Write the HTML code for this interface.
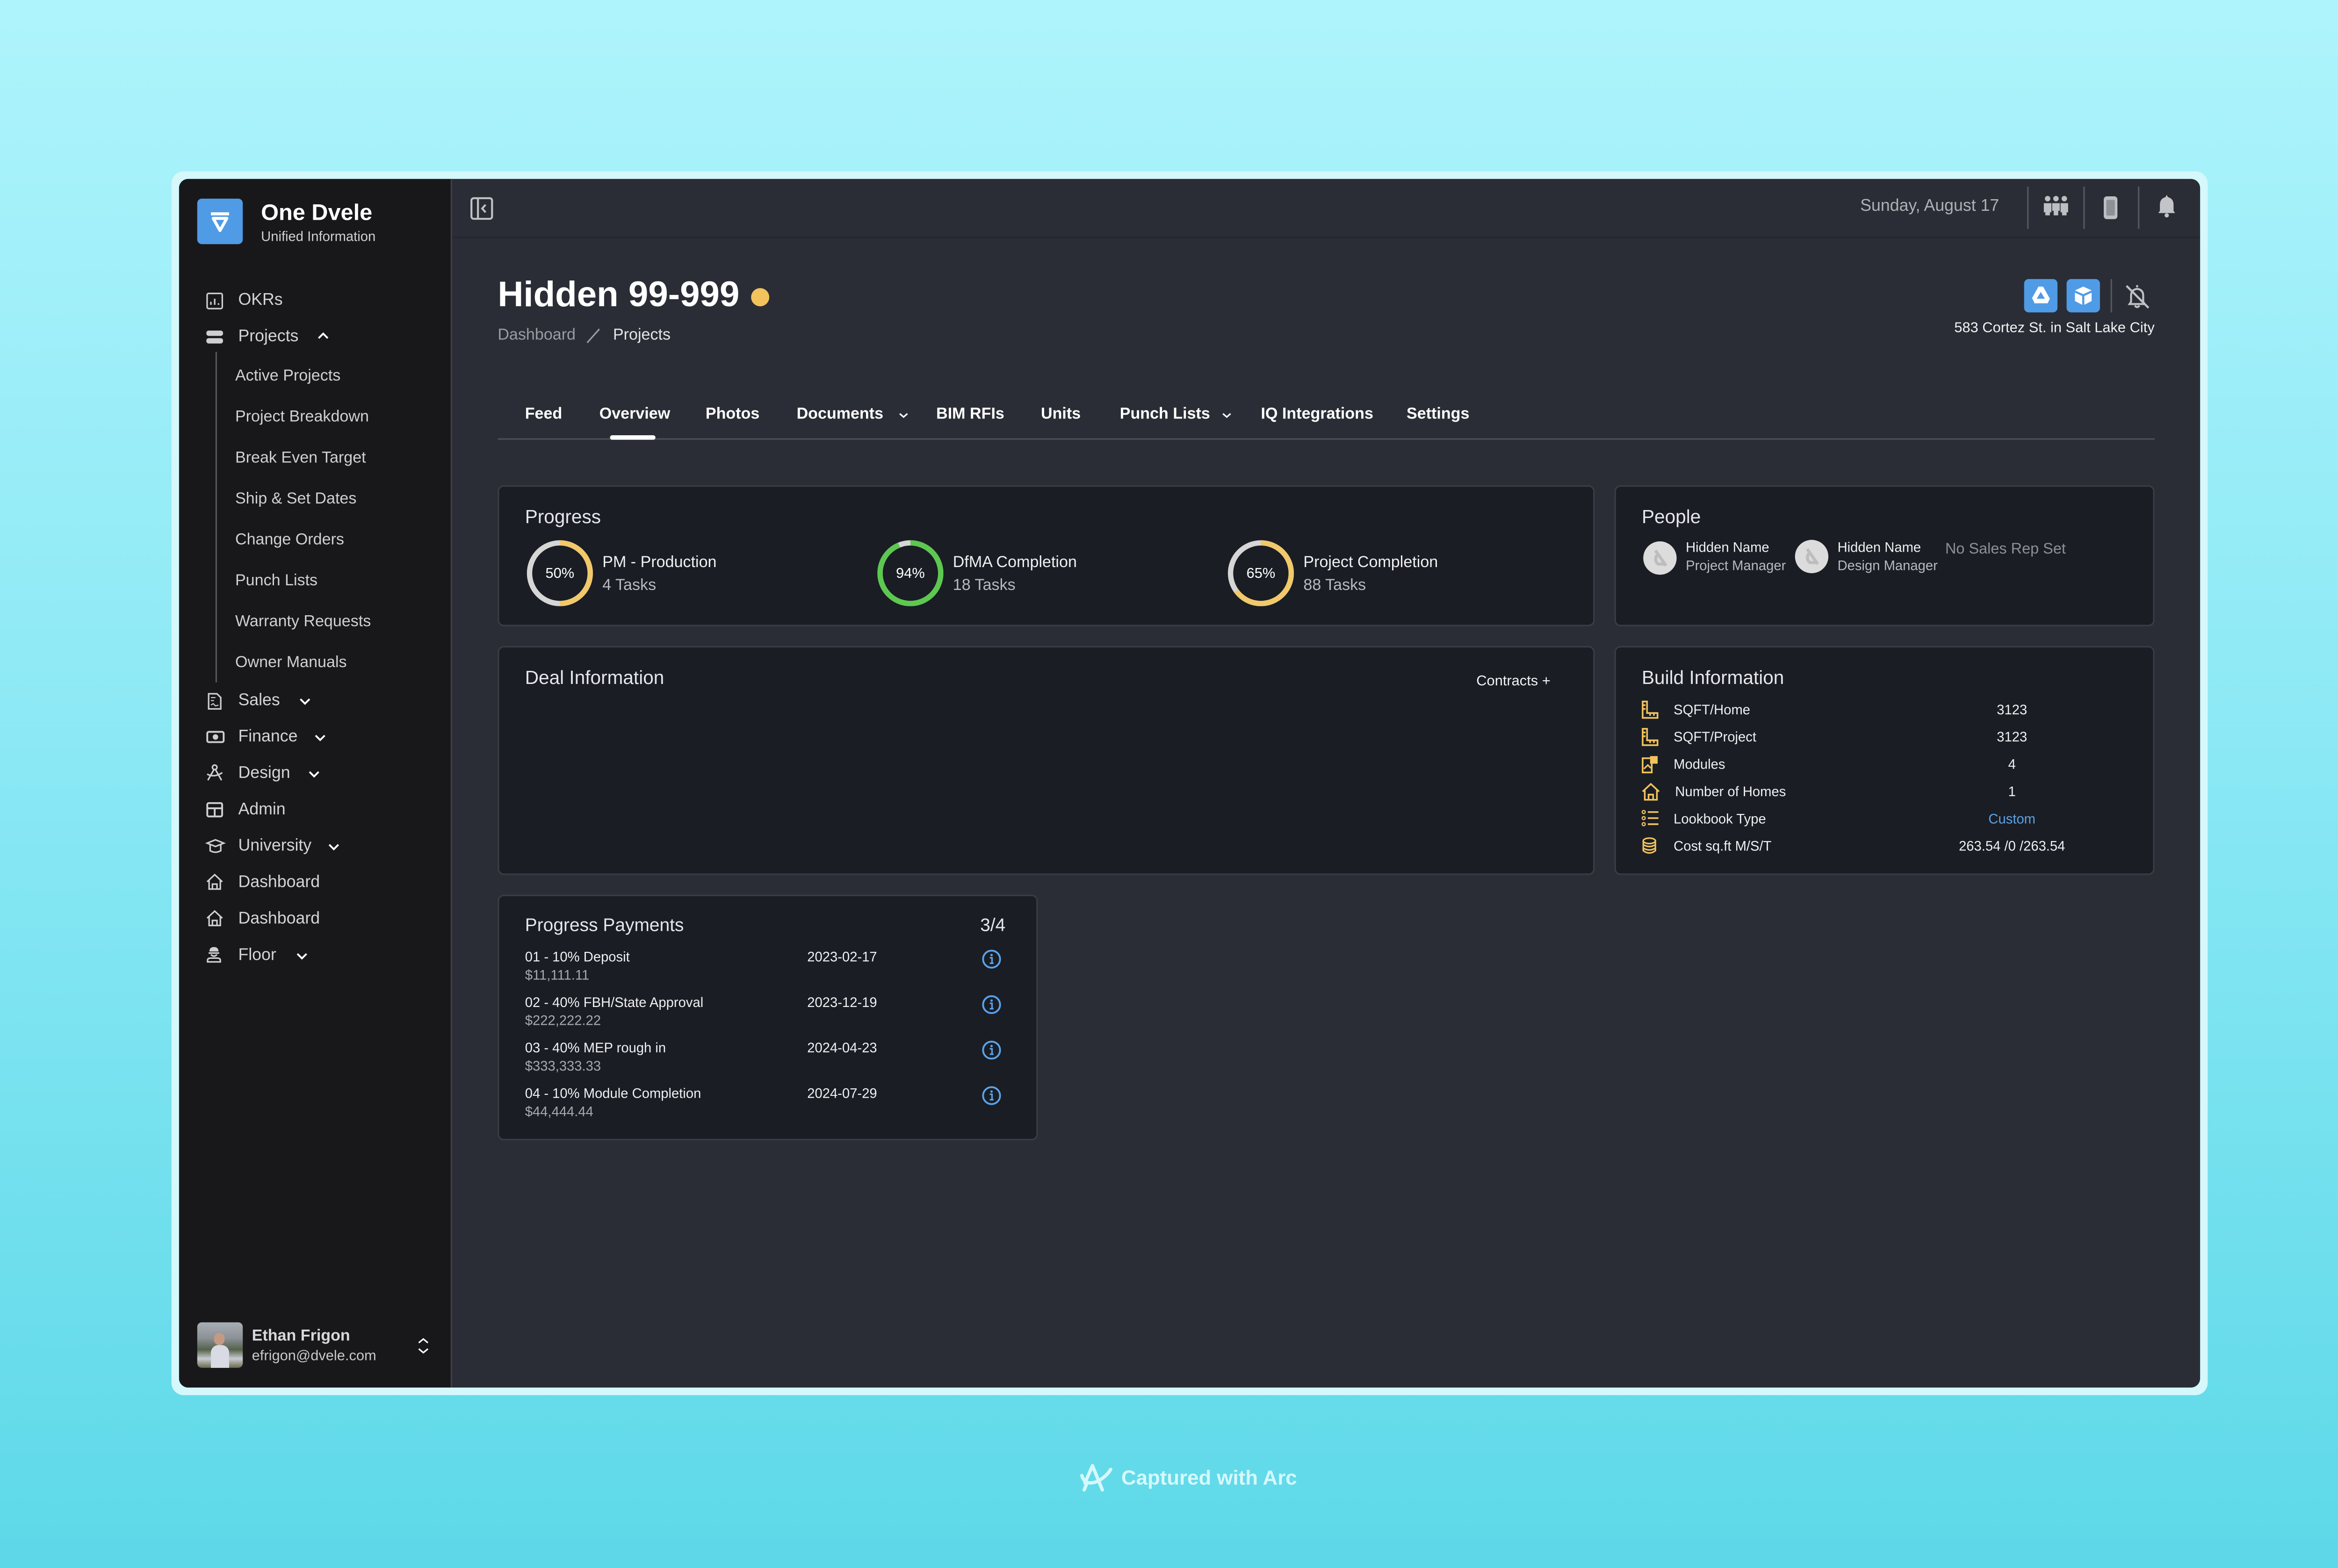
<!DOCTYPE html>
<html><head><meta charset="utf-8">
<style>
html,body{margin:0;padding:0;width:5088px;height:3354px;overflow:hidden}
body{background:linear-gradient(180deg,#aef4fc 0%,#8de9f5 45%,#5dd8e8 100%)}
#s{position:absolute;left:0;top:0;width:1568px;height:1034px;transform-origin:0 0;transform:scale(3.2449,3.2437);font-family:"Liberation Sans",sans-serif}
.a{position:absolute;white-space:nowrap;line-height:1}
.card{position:absolute;background:#1a1d24;border:1px solid #383c45;border-radius:4px;box-sizing:border-box}
.nav{color:#d4d4d8;font-size:11px}
.sub{color:#cfd0d4;font-size:10.5px}
svg{position:absolute;overflow:visible}
</style></head><body><div id="s">
<!-- window frame -->
<div style="position:absolute;left:113px;top:113px;width:1342px;height:807px;border-radius:8px;background:#d4f8fb"></div>
<div style="position:absolute;left:118px;top:118px;width:1332px;height:797px;border-radius:6px;background:#2a2d35;overflow:hidden">
  <div style="position:absolute;left:0;top:0;width:179px;height:797px;background:#18181b;border-right:1px solid #3d4048"></div>
  <div style="position:absolute;left:180px;top:38px;width:1152px;height:1px;background:#24272e"></div>
</div>

<!-- sidebar logo -->
<div style="position:absolute;left:130px;top:131px;width:30px;height:30px;border-radius:3px;background:#4f9be6"></div>
<svg style="left:130px;top:131px" width="30" height="30"><path d="M9 10H21M10.5 13H19.5L15 21Z" stroke="#fff" stroke-width="2" fill="none" stroke-linejoin="round"/></svg>
<div class="a" style="left:172px;top:133px;font-size:15px;font-weight:bold;color:#fff">One Dvele</div>
<div class="a" style="left:172px;top:152px;font-size:9px;color:#d0d0d4">Unified Information</div>

<!-- nav icons -->
<svg style="left:136px;top:193px" width="11" height="11"><rect x="0.5" y="0.5" width="10" height="10" rx="1" stroke="#cfcfd3" fill="none"/><path d="M3 8V6M5.5 8V4M8 8V7" stroke="#cfcfd3"/></svg>
<div class="a nav" style="left:157px;top:193px">OKRs</div>
<svg style="left:136px;top:218px" width="11" height="9"><rect x="0" y="0" width="11" height="3.5" rx="1.5" fill="#cfcfd3"/><rect x="0" y="5" width="11" height="3.5" rx="1.5" fill="#cfcfd3"/></svg>
<div class="a nav" style="left:157px;top:217px">Projects</div>
<svg style="left:209px;top:219px" width="8" height="5"><path d="M1 4L4 1L7 4" stroke="#fff" stroke-width="1.2" fill="none"/></svg>
<div style="position:absolute;left:142px;top:232px;width:1px;height:218px;background:#55575d"></div>
<div class="a sub" style="left:155px;top:243px">Active Projects</div>
<div class="a sub" style="left:155px;top:270px">Project Breakdown</div>
<div class="a sub" style="left:155px;top:297px">Break Even Target</div>
<div class="a sub" style="left:155px;top:324px">Ship &amp; Set Dates</div>
<div class="a sub" style="left:155px;top:351px">Change Orders</div>
<div class="a sub" style="left:155px;top:378px">Punch Lists</div>
<div class="a sub" style="left:155px;top:405px">Warranty Requests</div>
<div class="a sub" style="left:155px;top:432px">Owner Manuals</div>

<svg style="left:137px;top:457px" width="9" height="11"><path d="M0.5 0.5H6L8.5 3V10.5H0.5Z" stroke="#cfcfd3" fill="none"/><path d="M2 3H5M2 5H4M2 8L3.5 7L5 8.5L7 8" stroke="#cfcfd3" stroke-width="0.7" fill="none"/></svg>
<div class="a nav" style="left:157px;top:457px">Sales</div>
<svg style="left:197px;top:460px" width="8" height="5"><path d="M1 1L4 4L7 1" stroke="#fff" stroke-width="1.2" fill="none"/></svg>
<svg style="left:136px;top:482px" width="12" height="8"><rect x="0.6" y="0.6" width="10.8" height="6.8" rx="1" stroke="#cfcfd3" stroke-width="1.2" fill="none"/><circle cx="6" cy="4" r="1.8" fill="#cfcfd3"/></svg>
<div class="a nav" style="left:157px;top:481px">Finance</div>
<svg style="left:207px;top:484px" width="8" height="5"><path d="M1 1L4 4L7 1" stroke="#fff" stroke-width="1.2" fill="none"/></svg>
<svg style="left:136px;top:504px" width="11" height="11"><circle cx="5.5" cy="2" r="1.5" stroke="#cfcfd3" fill="none"/><path d="M5 3.5L1 10.5M6 3.5L10 10.5M0.5 6.5Q5.5 9 10.5 5.5" stroke="#cfcfd3" fill="none"/></svg>
<div class="a nav" style="left:157px;top:505px">Design</div>
<svg style="left:203px;top:508px" width="8" height="5"><path d="M1 1L4 4L7 1" stroke="#fff" stroke-width="1.2" fill="none"/></svg>
<svg style="left:136px;top:529px" width="11" height="10"><rect x="0.6" y="0.6" width="9.8" height="8.8" rx="1" stroke="#cfcfd3" stroke-width="1.2" fill="none"/><path d="M0.6 4H10.4M5.5 4V9.4" stroke="#cfcfd3" stroke-width="1.2"/></svg>
<div class="a nav" style="left:157px;top:529px">Admin</div>
<svg style="left:136px;top:553px" width="12" height="10"><path d="M0.5 3L6 0.8L11.5 3L6 5.2Z M2.5 4V8Q6 10 9.5 8V4" stroke="#cfcfd3" fill="none"/></svg>
<div class="a nav" style="left:157px;top:553px">University</div>
<svg style="left:216px;top:556px" width="8" height="5"><path d="M1 1L4 4L7 1" stroke="#fff" stroke-width="1.2" fill="none"/></svg>
<svg style="left:136px;top:576px" width="11" height="11"><path d="M0.5 5.5L5.5 0.8L10.5 5.5M1.8 4.5V10.3H9.2V4.5M4 10.3V7H7V10.3" stroke="#cfcfd3" fill="none"/></svg>
<div class="a nav" style="left:157px;top:577px">Dashboard</div>
<svg style="left:136px;top:600px" width="11" height="11"><path d="M0.5 5.5L5.5 0.8L10.5 5.5M1.8 4.5V10.3H9.2V4.5M4 10.3V7H7V10.3" stroke="#cfcfd3" fill="none"/></svg>
<div class="a nav" style="left:157px;top:601px">Dashboard</div>
<svg style="left:136px;top:624px" width="10" height="11"><path d="M2 3.5Q2 0.5 5 0.5Q8 0.5 8 3.5Z" fill="#cfcfd3"/><path d="M1.5 4.5H8.5M3 5.5Q5 7.5 7 5.5M0.8 10.3V9Q1 7.8 3 7.8H7Q9 7.8 9.2 9V10.3Z" stroke="#cfcfd3" fill="none"/></svg>
<div class="a nav" style="left:157px;top:625px">Floor</div>
<svg style="left:195px;top:628px" width="8" height="5"><path d="M1 1L4 4L7 1" stroke="#fff" stroke-width="1.2" fill="none"/></svg>

<!-- user -->
<div style="position:absolute;left:130px;top:872px;width:30px;height:30px;border-radius:3px;background:linear-gradient(180deg,#a9afb5 0%,#8b9196 35%,#55624a 60%,#c9ccd4 80%,#6a6a4a 100%)"></div>
<div style="position:absolute;left:139px;top:887px;width:12px;height:15px;border-radius:5px 5px 0 0;background:#d8dbe4"></div>
<div style="position:absolute;left:141px;top:879px;width:7px;height:8px;border-radius:4px;background:#c49a84"></div>
<div class="a" style="left:166px;top:876px;font-size:10.5px;font-weight:bold;color:#d8d8dc">Ethan Frigon</div>
<div class="a" style="left:166px;top:890px;font-size:9.5px;color:#c8c8cc">efrigon@dvele.com</div>
<svg style="left:275px;top:882px" width="8" height="11"><path d="M1 3.5L4 1L7 3.5M1 7.5L4 10L7 7.5" stroke="#fff" stroke-width="1" fill="none"/></svg>

<!-- header -->
<svg style="left:310px;top:130px" width="15" height="15"><rect x="0.7" y="0.7" width="13.6" height="13.6" rx="1.5" stroke="#bfc1c5" stroke-width="1.3" fill="none"/><path d="M5 1V14M10 5L7.8 7.5L10 10" stroke="#bfc1c5" stroke-width="1.3" fill="none"/></svg>
<div class="a" style="left:1226px;top:131px;font-size:11px;color:#aeb0b5">Sunday, August 17</div>
<div style="position:absolute;left:1336px;top:123px;width:1px;height:28px;background:#54575e"></div>
<div style="position:absolute;left:1373px;top:123px;width:1px;height:28px;background:#54575e"></div>
<div style="position:absolute;left:1409px;top:123px;width:1px;height:28px;background:#54575e"></div>
<svg style="left:1346px;top:129px" width="18" height="14"><circle cx="3.5" cy="2" r="1.8" fill="#bdbfc3"/><circle cx="9" cy="2" r="1.8" fill="#bdbfc3"/><circle cx="14.5" cy="2" r="1.8" fill="#bdbfc3"/><path d="M1 5H6V11H5V13H2V11H1Z M6.5 5H11.5V10H10.5V13H7.5V10H6.5Z M12 5H17V11H16V13H13V11H12Z" fill="#bdbfc3"/></svg>
<svg style="left:1386px;top:129px" width="10" height="16"><rect x="0.5" y="0.5" width="9" height="15" rx="2" fill="#bdbfc3"/><rect x="2.2" y="2.8" width="5.6" height="10.4" rx="0.8" fill="#8f9196"/></svg>
<svg style="left:1422px;top:128px" width="12" height="16"><path d="M6 0.5L6.8 2Q10.5 3 10.5 7V11L11.5 12.5H0.5L1.5 11V7Q1.5 3 5.2 2Z" fill="#c2c4c8"/><circle cx="6" cy="14" r="1.4" fill="#c2c4c8"/></svg>

<!-- title -->
<div class="a" style="left:328px;top:183px;font-size:23.5px;font-weight:bold;color:#fff">Hidden 99-999</div>
<div style="position:absolute;left:495px;top:190px;width:12px;height:12px;border-radius:50%;background:#f2c35c"></div>
<div class="a" style="left:328px;top:216px;font-size:10.5px;color:#9a9ca2">Dashboard</div>
<svg style="left:386px;top:216px" width="10" height="11"><path d="M1 10L9 1" stroke="#9a9ca2"/></svg>
<div class="a" style="left:404px;top:216px;font-size:10.5px;color:#e4e4e7">Projects</div>

<div style="position:absolute;left:1334px;top:184px;width:22px;height:22px;border-radius:3px;background:#4f9be6"></div>
<svg style="left:1334px;top:184px" width="22" height="22"><path d="M9.5 5H12.5L17 13L15.5 16H6.5L5 13Z" fill="#fff"/><path d="M8.3 13L11 8.5L13.7 13Z" fill="#4f9be6"/><path d="M5 13L6.5 16" stroke="#4f9be6" stroke-width="0.8"/></svg>
<div style="position:absolute;left:1362px;top:184px;width:22px;height:22px;border-radius:3px;background:#4f9be6"></div>
<svg style="left:1362px;top:184px" width="22" height="22"><path d="M11 5L16.5 7.5L11 10L5.5 7.5Z" fill="#fff"/><path d="M5.5 9L10.3 11.2V17L5.5 14.5Z M11.7 11.2L16.5 9V14.5L11.7 17Z" fill="#fff"/></svg>
<div style="position:absolute;left:1391px;top:184px;width:1px;height:22px;background:#55585e"></div>
<svg style="left:1399px;top:186px" width="19" height="19"><path d="M9.5 2V3.5M5.5 13V9Q5.5 5 9.5 4.5Q13.5 5 13.5 9V13L14.5 14.5H4.5Z M8 15.5Q9.5 17.5 11 15.5" stroke="#bfc1c5" stroke-width="1.3" fill="none"/><path d="M2.5 2.5L17 17" stroke="#bfc1c5" stroke-width="1.4"/></svg>
<div class="a" style="left:1200px;top:212px;width:220px;text-align:right;font-size:9.5px;color:#f2f2f4">583 Cortez St. in Salt Lake City</div>

<!-- tabs -->
<div style="position:absolute;left:328px;top:289px;width:1092px;height:1px;background:#4c4f57"></div>
<div style="position:absolute;left:402px;top:287px;width:30px;height:3px;border-radius:2px;background:#fff"></div>
<div class="a" style="left:346px;top:268px;font-size:10.5px;font-weight:bold;color:#fff">Feed</div>
<div class="a" style="left:395px;top:268px;font-size:10.5px;font-weight:bold;color:#fff">Overview</div>
<div class="a" style="left:465px;top:268px;font-size:10.5px;font-weight:bold;color:#fff">Photos</div>
<div class="a" style="left:525px;top:268px;font-size:10.5px;font-weight:bold;color:#fff">Documents</div>
<svg style="left:592px;top:272px" width="7" height="4"><path d="M1 0.8L3.5 3L6 0.8" stroke="#fff" fill="none"/></svg>
<div class="a" style="left:617px;top:268px;font-size:10.5px;font-weight:bold;color:#fff">BIM RFIs</div>
<div class="a" style="left:686px;top:268px;font-size:10.5px;font-weight:bold;color:#fff">Units</div>
<div class="a" style="left:738px;top:268px;font-size:10.5px;font-weight:bold;color:#fff">Punch Lists</div>
<svg style="left:805px;top:272px" width="7" height="4"><path d="M1 0.8L3.5 3L6 0.8" stroke="#fff" fill="none"/></svg>
<div class="a" style="left:831px;top:268px;font-size:10.5px;font-weight:bold;color:#fff">IQ Integrations</div>
<div class="a" style="left:927px;top:268px;font-size:10.5px;font-weight:bold;color:#fff">Settings</div>

<!-- Progress card -->
<div class="card" style="left:328px;top:320px;width:723px;height:93px"></div>
<div class="a" style="left:346px;top:335px;font-size:12.5px;color:#e6e6ea">Progress</div>
<svg style="left:346px;top:356px" width="46" height="46"><circle cx="23" cy="22" r="20" stroke="#d6d6d6" stroke-width="3.5" fill="none"/><circle cx="23" cy="22" r="20" stroke="#f2c96a" stroke-width="3.5" fill="none" stroke-dasharray="62.8 200" transform="rotate(-90 23 22)"/></svg>
<div class="a" style="left:346px;top:374px;width:46px;text-align:center;font-size:9.5px;color:#fff">50%</div>
<div class="a" style="left:397px;top:366px;font-size:10.5px;color:#f0f0f2">PM - Production</div>
<div class="a" style="left:397px;top:381px;font-size:10.5px;color:#b8b9bd">4 Tasks</div>
<svg style="left:577px;top:356px" width="46" height="46"><circle cx="23" cy="22" r="20" stroke="#d6d6d6" stroke-width="3.5" fill="none"/><circle cx="23" cy="22" r="20" stroke="#5cc84f" stroke-width="3.5" fill="none" stroke-dasharray="118 200" transform="rotate(-90 23 22)"/></svg>
<div class="a" style="left:577px;top:374px;width:46px;text-align:center;font-size:9.5px;color:#fff">94%</div>
<div class="a" style="left:628px;top:366px;font-size:10.5px;color:#f0f0f2">DfMA Completion</div>
<div class="a" style="left:628px;top:381px;font-size:10.5px;color:#b8b9bd">18 Tasks</div>
<svg style="left:808px;top:356px" width="46" height="46"><circle cx="23" cy="22" r="20" stroke="#d6d6d6" stroke-width="3.5" fill="none"/><circle cx="23" cy="22" r="20" stroke="#f2c96a" stroke-width="3.5" fill="none" stroke-dasharray="81.7 200" transform="rotate(-90 23 22)"/></svg>
<div class="a" style="left:808px;top:374px;width:46px;text-align:center;font-size:9.5px;color:#fff">65%</div>
<div class="a" style="left:859px;top:366px;font-size:10.5px;color:#f0f0f2">Project Completion</div>
<div class="a" style="left:859px;top:381px;font-size:10.5px;color:#b8b9bd">88 Tasks</div>

<!-- People -->
<div class="card" style="left:1064px;top:320px;width:356px;height:93px"></div>
<div class="a" style="left:1082px;top:335px;font-size:12.5px;color:#e6e6ea">People</div>
<div style="position:absolute;left:1083px;top:357px;width:22px;height:22px;border-radius:50%;background:#dcdcdc"></div>
<svg style="left:1083px;top:357px" width="22" height="22"><path d="M8 6L15 16M9 9Q7 13 10 15L14 15" stroke="#bdbdbd" stroke-width="2" fill="none"/></svg>
<div class="a" style="left:1111px;top:357px;font-size:9px;color:#f0f0f2">Hidden Name</div>
<div class="a" style="left:1111px;top:369px;font-size:9px;color:#b8b9bd">Project Manager</div>
<div style="position:absolute;left:1183px;top:356px;width:22px;height:22px;border-radius:50%;background:#dcdcdc"></div>
<svg style="left:1183px;top:356px" width="22" height="22"><path d="M8 6L15 16M9 9Q7 13 10 15L14 15" stroke="#bdbdbd" stroke-width="2" fill="none"/></svg>
<div class="a" style="left:1211px;top:357px;font-size:9px;color:#f0f0f2">Hidden Name</div>
<div class="a" style="left:1211px;top:369px;font-size:9px;color:#b8b9bd">Design Manager</div>
<div class="a" style="left:1282px;top:358px;font-size:10px;color:#8e9096">No Sales Rep Set</div>

<!-- Deal info -->
<div class="card" style="left:328px;top:426px;width:723px;height:151px"></div>
<div class="a" style="left:346px;top:441px;font-size:12.5px;color:#e6e6ea">Deal Information</div>
<div class="a" style="left:973px;top:445px;font-size:9.5px;color:#f2f2f4">Contracts +</div>

<!-- Build info -->
<div class="card" style="left:1064px;top:426px;width:356px;height:151px"></div>
<div class="a" style="left:1082px;top:441px;font-size:12.5px;color:#e6e6ea">Build Information</div>
<svg style="left:1082px;top:462px" width="11" height="12"><path d="M0.6 0.6H3.5V8.2H10.4V11.4H0.6Z M1 3H2.5M1 5.5H2.5M5.5 8.5V10M8 8.5V10" stroke="#f2c35c" stroke-width="1.1" fill="none"/></svg>
<div class="a" style="left:1103px;top:464px;font-size:9px;color:#f0f0f2">SQFT/Home</div>
<div class="a" style="left:1276px;top:464px;width:100px;text-align:center;font-size:9px;color:#f0f0f2">3123</div>
<svg style="left:1082px;top:480px" width="11" height="12"><path d="M0.6 0.6H3.5V8.2H10.4V11.4H0.6Z M1 3H2.5M1 5.5H2.5M5.5 8.5V10M8 8.5V10" stroke="#f2c35c" stroke-width="1.1" fill="none"/></svg>
<div class="a" style="left:1103px;top:482px;font-size:9px;color:#f0f0f2">SQFT/Project</div>
<div class="a" style="left:1276px;top:482px;width:100px;text-align:center;font-size:9px;color:#f0f0f2">3123</div>
<svg style="left:1082px;top:498px" width="11" height="12"><rect x="0.6" y="2" width="6" height="9.4" stroke="#f2c35c" stroke-width="1.1" fill="none"/><rect x="5.5" y="0.6" width="5" height="5" fill="#f2c35c"/><path d="M1.5 9L4 6.5L6 8.5" stroke="#f2c35c" fill="none"/></svg>
<div class="a" style="left:1103px;top:500px;font-size:9px;color:#f0f0f2">Modules</div>
<div class="a" style="left:1276px;top:500px;width:100px;text-align:center;font-size:9px;color:#f0f0f2">4</div>
<svg style="left:1082px;top:516px" width="12" height="12"><path d="M0.6 6L6 1L11.4 6M2 5V11.4H10V5M4.5 11.4V8H7.5V11.4" stroke="#f2c35c" stroke-width="1.1" fill="none"/></svg>
<div class="a" style="left:1104px;top:518px;font-size:9px;color:#f0f0f2">Number of Homes</div>
<div class="a" style="left:1276px;top:518px;width:100px;text-align:center;font-size:9px;color:#f0f0f2">1</div>
<svg style="left:1082px;top:534px" width="11" height="11"><circle cx="1.3" cy="1.5" r="1" stroke="#f2c35c" stroke-width="0.8" fill="none"/><circle cx="1.3" cy="5.5" r="1" stroke="#f2c35c" stroke-width="0.8" fill="none"/><circle cx="1.3" cy="9.5" r="1" stroke="#f2c35c" stroke-width="0.8" fill="none"/><path d="M4 1.5H11M4 5.5H11M4 9.5H11" stroke="#f2c35c" stroke-width="1.1"/></svg>
<div class="a" style="left:1103px;top:536px;font-size:9px;color:#f0f0f2">Lookbook Type</div>
<div class="a" style="left:1276px;top:536px;width:100px;text-align:center;font-size:9px;color:#5aa3ea">Custom</div>
<svg style="left:1082px;top:552px" width="11" height="11"><ellipse cx="5" cy="2.5" rx="4" ry="1.8" stroke="#f2c35c" fill="none"/><path d="M1 2.5V9Q5 12 9 9V2.5M1 5Q5 7.5 9 5M1 7.3Q5 9.7 9 7.3" stroke="#f2c35c" fill="none"/></svg>
<div class="a" style="left:1103px;top:554px;font-size:9px;color:#f0f0f2">Cost sq.ft M/S/T</div>
<div class="a" style="left:1276px;top:554px;width:100px;text-align:center;font-size:9px;color:#f0f0f2">263.54 /0 /263.54</div>

<!-- Progress payments -->
<div class="card" style="left:328px;top:590px;width:356px;height:162px"></div>
<div class="a" style="left:346px;top:604px;font-size:12px;color:#e6e6ea">Progress Payments</div>
<div class="a" style="left:646px;top:604px;font-size:12px;color:#e6e6ea">3/4</div>

<div class="a" style="left:346px;top:627px;font-size:9px;color:#f0f0f2">01 - 10% Deposit</div>
<div class="a" style="left:346px;top:639px;font-size:9px;color:#a8a9ad">$11,111.11</div>
<div class="a" style="left:532px;top:627px;font-size:9px;color:#f0f0f2">2023-02-17</div>
<div class="a" style="left:346px;top:657px;font-size:9px;color:#f0f0f2">02 - 40% FBH/State Approval</div>
<div class="a" style="left:346px;top:669px;font-size:9px;color:#a8a9ad">$222,222.22</div>
<div class="a" style="left:532px;top:657px;font-size:9px;color:#f0f0f2">2023-12-19</div>
<div class="a" style="left:346px;top:687px;font-size:9px;color:#f0f0f2">03 - 40% MEP rough in</div>
<div class="a" style="left:346px;top:699px;font-size:9px;color:#a8a9ad">$333,333.33</div>
<div class="a" style="left:532px;top:687px;font-size:9px;color:#f0f0f2">2024-04-23</div>
<div class="a" style="left:346px;top:717px;font-size:9px;color:#f0f0f2">04 - 10% Module Completion</div>
<div class="a" style="left:346px;top:729px;font-size:9px;color:#a8a9ad">$44,444.44</div>
<div class="a" style="left:532px;top:717px;font-size:9px;color:#f0f0f2">2024-07-29</div>
<svg style="left:647px;top:626px" width="13" height="13"><circle cx="6.5" cy="6.5" r="5.6" stroke="#5aa3ea" stroke-width="1.2" fill="none"/><circle cx="6.5" cy="3.8" r="0.8" fill="#5aa3ea"/><path d="M5.3 5.6H6.8V9.2M5.3 9.2H7.8" stroke="#5aa3ea" stroke-width="1" fill="none"/></svg>
<svg style="left:647px;top:656px" width="13" height="13"><circle cx="6.5" cy="6.5" r="5.6" stroke="#5aa3ea" stroke-width="1.2" fill="none"/><circle cx="6.5" cy="3.8" r="0.8" fill="#5aa3ea"/><path d="M5.3 5.6H6.8V9.2M5.3 9.2H7.8" stroke="#5aa3ea" stroke-width="1" fill="none"/></svg>
<svg style="left:647px;top:686px" width="13" height="13"><circle cx="6.5" cy="6.5" r="5.6" stroke="#5aa3ea" stroke-width="1.2" fill="none"/><circle cx="6.5" cy="3.8" r="0.8" fill="#5aa3ea"/><path d="M5.3 5.6H6.8V9.2M5.3 9.2H7.8" stroke="#5aa3ea" stroke-width="1" fill="none"/></svg>
<svg style="left:647px;top:716px" width="13" height="13"><circle cx="6.5" cy="6.5" r="5.6" stroke="#5aa3ea" stroke-width="1.2" fill="none"/><circle cx="6.5" cy="3.8" r="0.8" fill="#5aa3ea"/><path d="M5.3 5.6H6.8V9.2M5.3 9.2H7.8" stroke="#5aa3ea" stroke-width="1" fill="none"/></svg>

<!-- footer -->
<svg style="left:711px;top:965px" width="24" height="20"><path d="M9 1.5L15.5 17.5M9 1.5L4 13M2 8Q4 15 12 12Q18 9 21 4M5 14L3.5 17.5" stroke="#d6f9fc" stroke-width="2.2" fill="none" stroke-linecap="round"/></svg>
<div class="a" style="left:739px;top:968px;font-size:13.5px;font-weight:bold;color:#d6f9fc">Captured with Arc</div>
</div></body></html>
